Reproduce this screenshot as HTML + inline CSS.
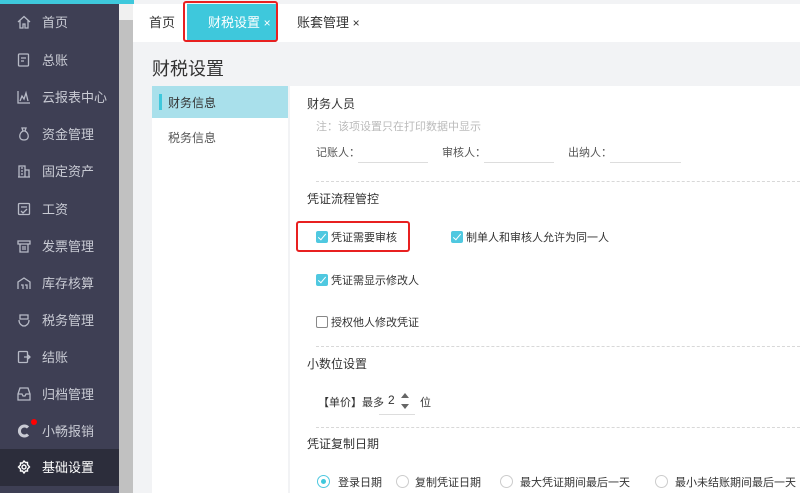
<!DOCTYPE html>
<html style="overflow:hidden;background:#f2f3f5"><head><meta charset="utf-8"><style>
*{margin:0;padding:0;box-sizing:border-box}
body{width:800px;height:493px;overflow:hidden;background:#f2f3f5;font-family:"Liberation Sans","Noto Sans CJK SC",sans-serif;position:relative;font-size:12px;color:#333}
.side{position:absolute;left:0;top:0;width:119px;height:493px;background:#3e3f54}
.topbar{position:absolute;left:0;top:0;width:134px;height:4px;background:#3ec8dc}
.sb{position:absolute;left:119px;top:4px;width:14px;height:489px;background:#c1c1c1}
.sbtrack{position:absolute;left:119px;top:4px;width:14px;height:16px;background:#f0f0f0}
.item{position:absolute;left:0;width:119px;height:37px;color:#c9cbd4;font-size:13px;line-height:37px;padding-left:42px}
.item svg{position:absolute;left:17px;top:11px}
.item.act{background:#2c2d3b;color:#fff}
.tabs{position:absolute;left:133px;top:4px;width:667px;height:38px;background:#fff}
.tab{position:absolute;top:0;height:38px;line-height:38px;font-size:13px;color:#333}
.title{position:absolute;left:152px;top:55px;font-size:18px;color:#333}
.lnav{position:absolute;left:152px;top:86px;width:136px;height:407px;background:#fff}
.main{position:absolute;left:290px;top:86px;width:510px;height:407px;background:#fff}
.t{position:absolute;white-space:nowrap}
.dash{position:absolute;left:316px;width:484px;border-top:1px dashed #d8d8d8}
.cb{position:absolute;width:12px;height:12px;border-radius:2px;background:#4fc8e0}
.cb:after{content:"";position:absolute;left:4px;top:1px;width:3px;height:7px;border:solid #fff;border-width:0 1.5px 1.5px 0;transform:rotate(40deg)}
.rd{position:absolute;width:13px;height:13px;border-radius:50%;border:1px solid #ccc;background:#fff}
</style></head><body>
<div class="side"></div>
<div class="topbar"></div>
<div class="sbtrack"></div><div class="sb" style="top:20px"></div>
<div class="item" style="top:4px"><svg width="14" height="14" viewBox="0 0 14 14" fill="none" stroke="#b7bac6" stroke-width="1.3"><path d="M1 7L7 1.5 13 7M3 5.5V13h3V9h2v4h3V5.5"/></svg>首页</div>
<div class="item" style="top:42px"><svg width="14" height="14" viewBox="0 0 14 14" fill="none" stroke="#b7bac6" stroke-width="1.3"><rect x="1.5" y="1" width="10" height="12" rx="1"/><path d="M4 5h5M4 8h3"/></svg>总账</div>
<div class="item" style="top:79px"><svg width="14" height="14" viewBox="0 0 14 14" fill="none" stroke="#b7bac6" stroke-width="1.3"><path d="M1 1v12h12M3 11l2-5 2 3 2-6 2 8"/></svg>云报表中心</div>
<div class="item" style="top:116px"><svg width="14" height="14" viewBox="0 0 14 14" fill="none" stroke="#b7bac6" stroke-width="1.3"><path d="M5 1h4L8 4h-2zM6 4C2 6 1 13 7 13s5-7 1-9"/></svg>资金管理</div>
<div class="item" style="top:153px"><svg width="14" height="14" viewBox="0 0 14 14" fill="none" stroke="#b7bac6" stroke-width="1.3"><path d="M2 13V2h6v11M8 6h4v7M1 13h12M4 4h2M4 7h2M4 10h2"/></svg>固定资产</div>
<div class="item" style="top:191px"><svg width="14" height="14" viewBox="0 0 14 14" fill="none" stroke="#b7bac6" stroke-width="1.3"><rect x="1.5" y="1.5" width="11" height="11" rx="1"/><path d="M4 5h6M4 9l2 2 4-4"/></svg>工资</div>
<div class="item" style="top:228px"><svg width="14" height="14" viewBox="0 0 14 14" fill="none" stroke="#b7bac6" stroke-width="1.3"><path d="M1 2h12v3H1zM3 5v8h8V5M5 8h4M5 10h4"/></svg>发票管理</div>
<div class="item" style="top:265px"><svg width="14" height="14" viewBox="0 0 14 14" fill="none" stroke="#b7bac6" stroke-width="1.3"><path d="M1 13V6l6-4 6 4v7M4 9h2v4M8 9h2v4"/></svg>库存核算</div>
<div class="item" style="top:302px"><svg width="14" height="14" viewBox="0 0 14 14" fill="none" stroke="#b7bac6" stroke-width="1.3"><path d="M2 7c0 4 3 6 5 6s5-2 5-6M3 2h8v4H3z"/></svg>税务管理</div>
<div class="item" style="top:339px"><svg width="14" height="14" viewBox="0 0 14 14" fill="none" stroke="#b7bac6" stroke-width="1.3"><rect x="1.5" y="1.5" width="9" height="11" rx="1"/><path d="M7 7h6M11 5l2 2-2 2"/></svg>结账</div>
<div class="item" style="top:376px"><svg width="14" height="14" viewBox="0 0 14 14" fill="none" stroke="#b7bac6" stroke-width="1.3"><path d="M3 1h8l2 6v6H1V7zM1 7h4l1 2h2l1-2h4"/></svg>归档管理</div>
<div class="item" style="top:413px"><svg width="14" height="14" viewBox="0 0 14 14" fill="none" stroke="#c9cbd4" stroke-width="3"><path d="M11 3.5A5 5 0 1 0 11 10.5"/></svg><span style="position:absolute;left:31px;top:6px;width:6px;height:6px;border-radius:50%;background:#f00"></span>小畅报销</div>
<div class="item act" style="top:449px"><svg width="14" height="14" viewBox="0 0 14 14" fill="none" stroke="#fff" stroke-width="1.4"><path d="M7 1l1.5 1.5h2v2L12.5 7l-2 2v2h-2L7 13 5.5 11h-2V9L1.5 7l2-2v-2h2z"/><circle cx="7" cy="7" r="2"/></svg>基础设置</div>

<div class="tabs">
 <div class="tab" style="left:16px">首页</div>
 <div class="tab" style="left:54px;width:89px;background:#3ec8dc;color:#fff;padding-left:21px">财税设置 <span style="font-size:12px">×</span></div>
 <div class="tab" style="left:164px">账套管理 <span style="font-size:12px">×</span></div>
</div>
<div style="position:absolute;left:183px;top:1px;width:95px;height:41px;border:2px solid #e82020;border-radius:3px"></div>
<div class="title">财税设置</div>
<div class="lnav">
 <div style="position:absolute;left:0;top:0;width:136px;height:32px;background:#a9e0eb"></div>
 <div style="position:absolute;left:7px;top:8px;width:3px;height:16px;background:#3ec8dc"></div>
 <div class="t" style="left:16px;top:8px;font-size:12px">财务信息</div>
 <div class="t" style="left:16px;top:43px;font-size:12px;color:#555">税务信息</div>
</div>
<div class="main"></div>
<div class="t" style="left:307px;top:95px;font-size:12px">财务人员</div>
<div class="t" style="left:316px;top:118px;font-size:11px;color:#bbb">注：该项设置只在打印数据中显示</div>
<div class="t" style="left:316px;top:144px;font-size:11px;color:#555">记账人：</div>
<div class="t" style="left:442px;top:144px;font-size:11px;color:#555">审核人：</div>
<div class="t" style="left:568px;top:144px;font-size:11px;color:#555">出纳人：</div>
<div style="position:absolute;left:358px;top:162px;width:70px;border-top:1px solid #ddd"></div>
<div style="position:absolute;left:484px;top:162px;width:70px;border-top:1px solid #ddd"></div>
<div style="position:absolute;left:610px;top:162px;width:71px;border-top:1px solid #ddd"></div>
<div class="dash" style="top:181px"></div>
<div class="t" style="left:307px;top:190px;font-size:12px">凭证流程管控</div>
<div class="cb" style="left:316px;top:231px"></div><div class="t" style="left:331px;top:229px;font-size:11px">凭证需要审核</div>
<div style="position:absolute;left:296px;top:221px;width:114px;height:31px;border:2px solid #e82020;border-radius:3px"></div>
<div class="cb" style="left:451px;top:231px"></div><div class="t" style="left:466px;top:229px;font-size:11px">制单人和审核人允许为同一人</div>
<div class="cb" style="left:316px;top:274px"></div><div class="t" style="left:331px;top:272px;font-size:11px">凭证需显示修改人</div>
<div style="position:absolute;left:316px;top:316px;width:12px;height:12px;border:1px solid #888;border-radius:2px"></div><div class="t" style="left:331px;top:314px;font-size:11px">授权他人修改凭证</div>
<div class="dash" style="top:346px"></div>
<div class="t" style="left:307px;top:355px;font-size:12px">小数位设置</div>
<div class="t" style="left:318px;top:394px;font-size:11px">【单价】最多</div>
<div class="t" style="left:388px;top:393px;font-size:12px">2</div>
<div style="position:absolute;left:401px;top:393px;width:0;height:0;border:4px solid transparent;border-bottom:5px solid #666;border-top:0"></div>
<div style="position:absolute;left:401px;top:404px;width:0;height:0;border:4px solid transparent;border-top:5px solid #666;border-bottom:0"></div>
<div style="position:absolute;left:379px;top:414px;width:36px;border-top:1px solid #ddd"></div>
<div class="t" style="left:420px;top:394px;font-size:11px">位</div>
<div class="dash" style="top:427px"></div>
<div class="t" style="left:307px;top:435px;font-size:12px">凭证复制日期</div>
<div class="rd" style="left:317px;top:475px;border-color:#4fc8e0"></div><div style="position:absolute;left:321px;top:479px;width:5px;height:5px;border-radius:50%;background:#3ec8dc"></div>
<div class="t" style="left:338px;top:474px;font-size:11px">登录日期</div>
<div class="rd" style="left:396px;top:475px"></div><div class="t" style="left:415px;top:474px;font-size:11px">复制凭证日期</div>
<div class="rd" style="left:500px;top:475px"></div><div class="t" style="left:520px;top:474px;font-size:11px">最大凭证期间最后一天</div>
<div class="rd" style="left:655px;top:475px"></div><div class="t" style="left:675px;top:474px;font-size:11px">最小未结账期间最后一天</div>
</body></html>
